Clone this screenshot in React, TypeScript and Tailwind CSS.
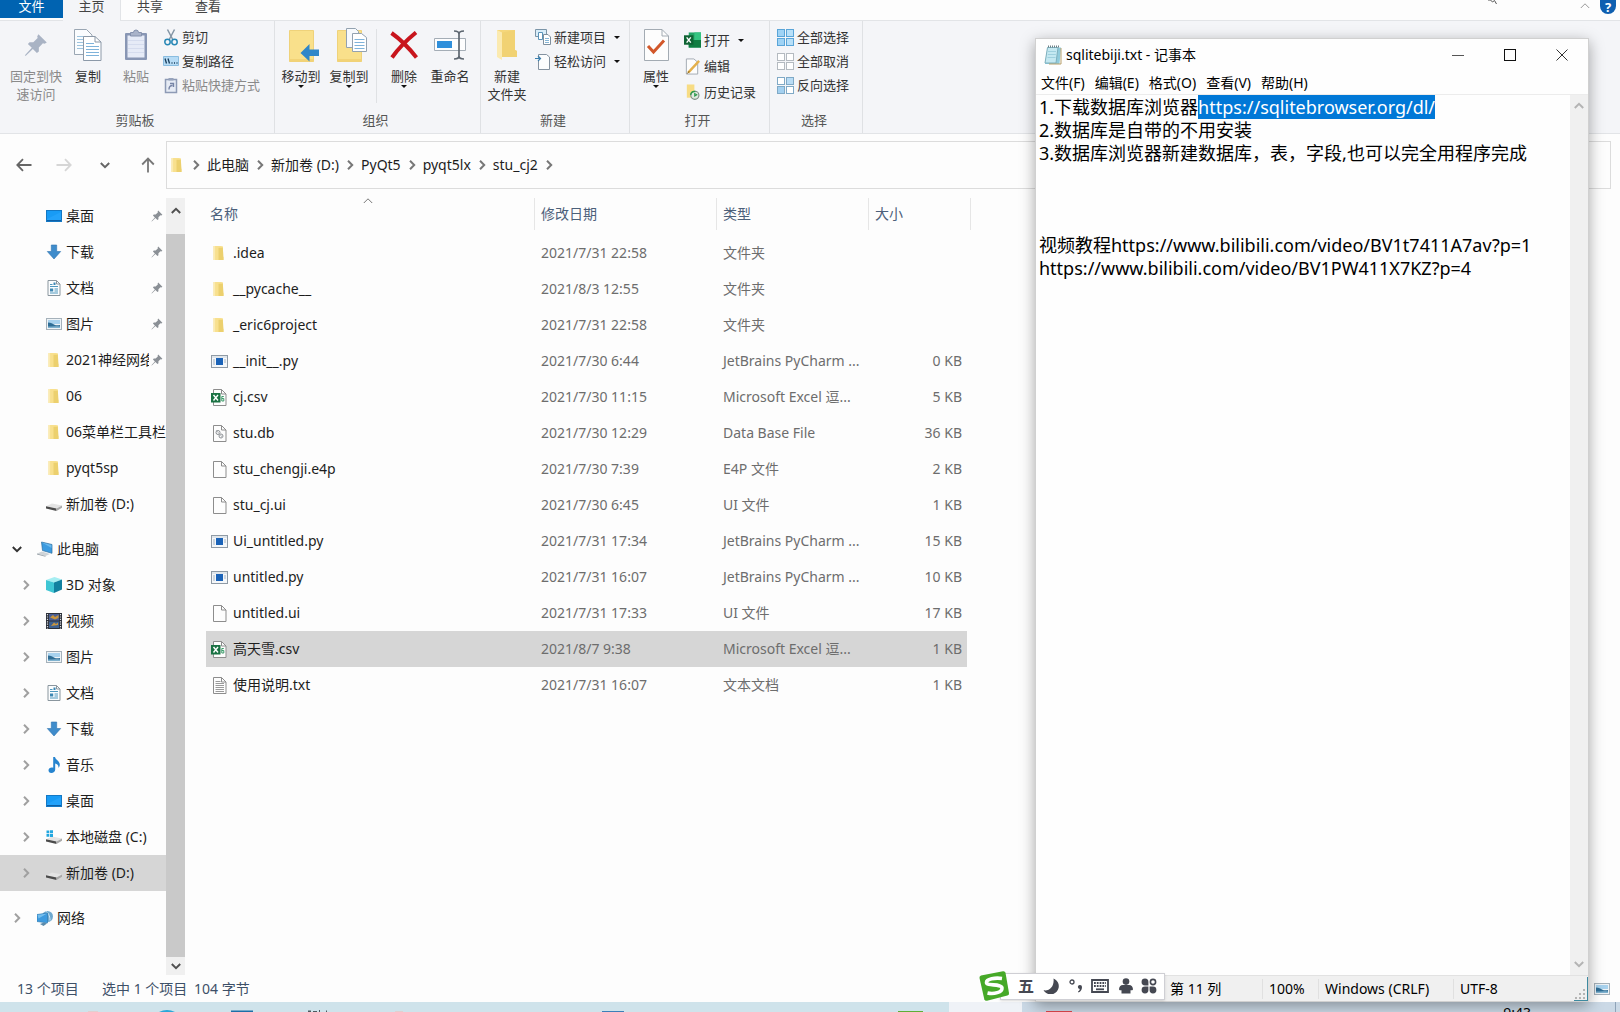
import { useEffect, useRef } from "react";
import type { ReactNode } from "react";

type IconProps = { className?: string };

const Chevron = ({ className = "" }: IconProps) => (
  <svg viewBox="0 0 10 10" className={`size-2.5 shrink-0 ${className}`} fill="none" stroke="currentColor">
    <path d="M3 0.8 7.2 5 3 9.2" />
  </svg>
);

const Caret = ({ className = "" }: IconProps) => (
  <svg viewBox="0 0 6 3" className={`h-[3px] w-1.5 shrink-0 ${className}`} fill="#111">
    <path d="M0 0h6L3 3z" />
  </svg>
);

const FolderIcon = ({ className = "size-4" }: IconProps) => (
  <svg viewBox="0 0 16 16" className={`shrink-0 ${className}`}>
    <path d="M2.5 1H10l2 .6V12l.5.4V15H2.5z" fill="#f8e08e" />
    <path d="M7.5 2.8h4.3l.7 9.5V15h-5z" fill="#ecd06e" />
    <path d="M2.5 1h1.6v14H2.5z" fill="#fbebb2" />
  </svg>
);

const DesktopIcon = () => (
  <svg viewBox="0 0 16 16" className="size-4 shrink-0">
    <rect x=".5" y="2.5" width="15" height="11" fill="#189bf5" stroke="#1478c4" />
    <path d="M1 11 15 4v9H1z" fill="#2ea9ff" opacity=".5" />
    <path d="M1 12.5h14" stroke="#0d5fa6" />
  </svg>
);

const DownloadIcon = () => (
  <svg viewBox="0 0 16 16" className="size-4 shrink-0">
    <path d="M5.3 1h5.4v6.5h4L8 15 1.3 7.5h4z" fill="#3f8ccb" stroke="#2f74b0" strokeWidth=".6" />
  </svg>
);

const DocumentIcon = () => (
  <svg viewBox="0 0 16 16" className="size-4 shrink-0" fill="none">
    <path d="M2 .5h8.5L14 4v11.5H2z" fill="#fbfdfe" stroke="#8a969e" />
    <path d="M10.5.5V4H14" stroke="#8a969e" />
    <path d="M4 4.500h2.500M4 6.500h8M8.500 9H12M8.500 11H12M4 13h8" stroke="#4f97bd" />
    <path d="M4 8.500h3.200v3H4zM7.500 2.500h2v2.500h-2z" fill="#3d87b3" />
  </svg>
);

const PictureIcon = () => (
  <svg viewBox="0 0 16 16" className="size-4 shrink-0">
    <rect x=".5" y="2.5" width="15" height="11" fill="#eef3f6" stroke="#a5b1ba" />
    <path d="M2 4h12v4H2z" fill="#a8d2ee" />
    <path d="M2 6.500c3 0 4.500 1.500 6.500 2.300S12 9.200 14 9v3H2z" fill="#2f6e96" />
    <path d="M2 10.500c4 0 7-.6 12 0V12H2z" fill="#7fb2cf" />
  </svg>
);

const DriveIcon = ({ system }: { system?: boolean }) => (
  <svg viewBox="0 0 16 16" className="size-4 shrink-0">
    <path d="M0 10.200 6 7.500l10 2-5.500 3z" fill="#e3e3e3" />
    <path d="M0 10.200 10.500 12.500V15L0 12.600z" fill="#4b4b4b" />
    <path d="M10.500 12.500 16 9.500v2.300L10.500 15z" fill="#a9a9a9" />
    {system && <path d="M.5 1.500h2.800v2.800H.5zM4 1.200h3v3.100H4zM.5 5h2.800v2.800H.5zM4 5h3v3H4z" fill="#22a7e0" />}
  </svg>
);

const ComputerIcon = () => (
  <svg viewBox="0 0 16 16" className="size-4 shrink-0">
    <path d="M4.500 1 15 3.500v8.800L5.500 9.500z" fill="#3c9be0" stroke="#2c6d9e" strokeWidth=".7" />
    <path d="M5 1.500 14.500 4v3z" fill="#7cc4f2" opacity=".7" />
    <path d="M0 12.500 5 10.500l8 2.500-4.500 2z" fill="#cfd4d8" />
    <path d="m0 12.500 8.500 2.500v.8L0 13.500z" fill="#98a1a8" />
  </svg>
);

const CubeIcon = () => (
  <svg viewBox="0 0 16 16" className="size-4 shrink-0">
    <path d="M0 3 8.500 0 16 2.500 8 5.500z" fill="#a6eef2" />
    <path d="M0 3 8 5.500V16L0 13z" fill="#3fc6d4" />
    <path d="M8 5.500 16 2.500V12.500L8 16z" fill="#12809f" />
  </svg>
);

const VideoIcon = () => (
  <svg viewBox="0 0 16 16" className="size-4 shrink-0">
    <path d="M0 0h16v16H0z" fill="#2b2f38" />
    <path d="M3 1h10v6.500H3z" fill="#4a5f95" />
    <path d="M3 8.500h10V15H3z" fill="#3f6190" />
    <path d="M4 4.500 7 2l2 2 3.500-2v3L9 6.500zM5 13l3-3.500 2 1.500 2-1.500V12z" fill="#c9953d" />
    <path d="M1.500 1v15M14.500 1v15" stroke="#dfe3e8" strokeWidth="1.2" strokeDasharray="1.2 1.2" />
  </svg>
);

const MusicIcon = () => (
  <svg viewBox="0 0 16 16" className="size-4 shrink-0">
    <path d="M7.200 0H9c.3 2.500 4.800 4 4.800 7.500 0 1.600-.6 2.700-1.300 3.500.3-3-1.300-4-3.300-4.600v6c0 2-1.800 3.600-3.800 3.600S2.500 14.800 2.500 13.300s1.500-2.700 3.300-2.700c.5 0 1 .1 1.400.2z" fill="#2684cf" />
  </svg>
);

const NetworkIcon = () => (
  <svg viewBox="0 0 16 16" className="size-4 shrink-0">
    <circle cx="10.500" cy="6.500" r="5.500" fill="#6fa9cf" />
    <path d="M9 1.500c2 1 4 4 4 9" stroke="#d3e8f5" fill="none" />
    <path d="M0 4.500 10.500 3v10L0 11.500z" fill="#3d9ade" stroke="#2c75ab" strokeWidth=".6" />
    <path d="m.5 5 9.500-1.500-8.500 5z" fill="#8ccdf4" opacity=".7" />
    <path d="m3 14 4-1.500 3 1L6.500 16z" fill="#5b8bab" />
  </svg>
);

const PinIcon = ({ className = "" }: IconProps) => (
  <svg viewBox="0 0 16 16" className={`shrink-0 ${className}`} fill="currentColor">
    <path d="M9.600.8 15.200 6.400 13.700 7.200 12.600 6.900 9.900 9.700 9.900 12.300 8.600 13.300 5.900 10.600 1.400 15 .6 15.300.9 14.500 5.200 9.900 2.600 7.300 3.700 6.100 6.200 6.100 9.100 3.400 8.800 2.300z" />
  </svg>
);

const PyIcon = () => (
  <svg viewBox="0 0 17 16" className="h-4 w-[17px] shrink-0">
    <rect x=".5" y="2.5" width="16" height="12" fill="#f4f7fa" stroke="#8f9aa5" />
    <path d="M1 4h15" stroke="#cbd4dc" />
    <path d="M5 5h7v7H5z" fill="#1b63b8" />
    <path d="M2 7h2M2 9h2M2 11h2M13 7h2M13 9h2" stroke="#a7b4c0" />
  </svg>
);

const Sheet = ({ children }: { children?: ReactNode }) => (
  <svg viewBox="0 0 17 17" className="size-[17px] shrink-0" fill="none">
    <path d="M2.500.5h8L15 5v11.500H2.500z" fill="#fdfdfd" stroke="#8d8d8d" />
    <path d="M10.500.5V5H15" stroke="#8d8d8d" />
    {children}
  </svg>
);

const CsvIcon = () => (
  <Sheet>
    <path d="M0 4h9.500v9.500H0z" fill="#1a7243" />
    <path d="m2.500 6 4.500 5.500M7 6l-4.500 5.500" stroke="#fff" strokeWidth="1.400" />
    <path d="M12.800 7.500h-2v4.500h2V9.500h-2" stroke="#3a9c68" />
  </Sheet>
);

const DbIcon = () => (
  <Sheet>
    <circle cx="7" cy="7.500" r="2" stroke="#8b8f93" />
    <circle cx="10" cy="11" r="2" stroke="#8b8f93" />
    <path d="m5 5 7 8" stroke="#b5b8bb" />
  </Sheet>
);

const TxtIcon = () => (
  <Sheet>
    <path d="M4.500 4.500h5M4.500 6.500h8.500M4.500 8.500h8.500M4.500 10.500h8.500M4.500 12.500h8.500M4.500 14.500h8.500" stroke="#9a9a9a" />
  </Sheet>
);

// ---- ribbon drawings

const CopyIcon = () => (
  <svg viewBox="0 0 28 32" className="h-8 w-7" fill="none">
    <path d="M.5.500h12L18 6v19.500H.5z" fill="#fafcfe" stroke="#9aa6b3" />
    <path d="M3 7.500h8M3 10.500h8M3 13.500h6M3 16.500h6M3 19.500h6" stroke="#9cc3de" />
    <path d="M9.500 7.500h11.500l6 5.500v18.500H9.500z" fill="#fff" stroke="#8c99a8" />
    <path d="M21 7.500V13h6" stroke="#8c99a8" />
    <path d="M12 14.500h8M12 17.500h13M12 20.500h13M12 23.500h13M12 26.500h13" stroke="#7fb3da" />
  </svg>
);

const PasteIcon = () => (
  <svg viewBox="0 0 24 32" className="h-8 w-6" fill="none">
    <rect x="1" y="4" width="22" height="27" rx="1" fill="#8896b4" />
    <path d="M3.500 6.500h17v22h-17z" fill="#e6ebf7" />
    <path d="M4 11.500h16M4 15.500h16M4 19.500h16M4 23.500h16" stroke="#d5dcee" />
    <path d="M6.500 3.500h3a2.500 2.500 0 0 1 5 0h3V7h-11z" fill="#a9b3c9" stroke="#8491ad" />
  </svg>
);

const BigFolder = ({ children }: { children?: ReactNode }) => (
  <svg viewBox="0 0 30 34" className="ml-1.5 h-[34px] w-[30px]" fill="none">
    <path d="M.5 2.500h24v31H.5z" fill="#f9e08b" stroke="#efd27a" />
    <path d="M.5 31h24v2.500H.5z" fill="#f2d377" />
    {children}
  </svg>
);

const DeleteIcon = () => (
  <svg viewBox="0 0 28 28" className="size-7" fill="none" stroke="#c8151d" strokeWidth="4">
    <path d="M1.500 2C10 8 19 17 26.500 26.500M26 1.500C18 8 8 18 2 26.500" />
  </svg>
);

const RenameIcon = () => (
  <svg viewBox="0 0 32 30" className="h-[30px] w-8" fill="none">
    <path d="M.5 8.500h31v12H.5z" fill="#fdfdfe" stroke="#a4adb6" />
    <path d="M3 11h15v7H3z" fill="#2f8fdb" />
    <path d="M20 1c3 0 5 .5 5 3v22c0 2-2 3-5 3M30 1c-3 0-5 .5-5 3v22c0 2 2 3 5 3" stroke="#5d6670" strokeWidth="1.700" />
  </svg>
);

const NewFolderIcon = () => (
  <svg viewBox="0 0 22 32" className="h-8 w-[22px]">
    <path d="M1 1h18v20l2 1v6H6l-5-1z" fill="#f5d77c" />
    <path d="M1 1 6 3.500V31L1 28z" fill="#fbeab0" />
    <path d="M6 3.500 19 1v20l2 1v6H6z" fill="#f1d273" />
  </svg>
);

const PropertiesIcon = () => (
  <svg viewBox="0 0 25 32" className="h-8 w-[25px]" fill="none">
    <path d="M.5.500H18L24.500 7v24.500H.5z" fill="#fdfdfd" stroke="#a3abb3" />
    <path d="M18 .5V7h6.500" stroke="#a3abb3" />
    <path d="m4 17 5.500 6L20 11.500" stroke="#d2572a" strokeWidth="3" />
  </svg>
);

const CutIcon = () => (
  <svg viewBox="0 0 16 17" className="h-[17px] w-4" fill="none">
    <path d="M4.500.500 10 11M11.500.500 6 11" stroke="#8395a5" strokeWidth="1.500" />
    <circle cx="4.500" cy="13" r="2.700" stroke="#2787b5" strokeWidth="1.500" />
    <circle cx="11.500" cy="13" r="2.700" stroke="#2787b5" strokeWidth="1.500" />
  </svg>
);

const CopyPathIcon = () => (
  <svg viewBox="0 0 16 10" className="h-2.5 w-4" fill="none">
    <path d="M.5.500h15v9H.5z" fill="#b7dcf6" stroke="#8abde0" />
    <path d="m2 2.500 1.500 5M5 2.500l1.500 5" stroke="#173d5c" strokeWidth="1.300" />
    <path d="M8.500 7h1M11 7h1M13.500 7h1" stroke="#173d5c" strokeWidth="1.300" />
  </svg>
);

const PasteLinkIcon = () => (
  <svg viewBox="0 0 14 17" className="h-[17px] w-3.5" fill="none">
    <path d="M1.500 2.500h11v13h-11z" fill="#e6ebf5" stroke="#8d9ab5" strokeWidth="1.500" />
    <path d="M4.500 1h5v2.500h-5z" fill="#97a3bc" />
    <path d="M5 12.500c0-2.500 1-4 3.500-4M6 6.500h3.500V10" stroke="#7684a6" strokeWidth="1.400" />
  </svg>
);

const NewItemIcon = () => (
  <svg viewBox="0 0 16 16" className="size-4" fill="none">
    <path d="M.5.500h11v7H.5z" fill="#d9edf9" stroke="#7b95a8" />
    <path d="M3.500 3.500h4v7h-4z" fill="#fff" stroke="#5a93b8" />
    <path d="M8.500 5.500H13l2.500 2.500v7.500h-7z" fill="#fff" stroke="#7f8f9d" />
    <path d="M10 9.500h4M10 11.500h4M10 13.500h4" stroke="#86b5d6" />
  </svg>
);

const EasyAccessIcon = () => (
  <svg viewBox="0 0 16 17" className="h-[17px] w-4" fill="none">
    <path d="M3.500 5V1.500h8L14.500 4v12.500h-11V8" fill="#fcfdfe" stroke="#8492a0" />
    <path d="M0 5.500h5M3 3l2.500 2.500L3 8" stroke="#3b7fae" strokeWidth="1.200" />
  </svg>
);

const ExcelIcon = () => (
  <svg viewBox="0 0 18 16" className="h-4 w-[18px]" fill="none">
    <path d="M5 0h13v16H5z" fill="#21a366" />
    <path d="M11 0h7v8h-7z" fill="#33c481" />
    <path d="M5 8h13v8H5z" fill="#107c41" />
    <path d="M0 3h10v10H0z" fill="#0e6334" />
    <path d="m2.800 5.200 4.400 5.600M7.200 5.200l-4.400 5.600" stroke="#fff" strokeWidth="1.500" />
  </svg>
);

const EditIcon = () => (
  <svg viewBox="0 0 18 17" className="h-[17px] w-[18px]" fill="none">
    <path d="M2.500.500h8L14.500 4v12.500h-12z" fill="#fdfdfd" stroke="#a0a8b0" />
    <path d="M4.500 15 16 2.500" stroke="#e4b04c" strokeWidth="2.500" />
    <path d="m3.500 16 2-2.500" stroke="#71500f" />
  </svg>
);

const HistoryIcon = () => (
  <svg viewBox="0 0 18 17" className="h-[17px] w-[18px]" fill="none">
    <path d="M3 0h8v14H3z" fill="#f7dc84" />
    <circle cx="11.500" cy="11.500" r="4.300" fill="#dfe9df" stroke="#7d8d83" strokeWidth="1.200" />
    <path d="M7 11c.5-2.500 2.500-4 5-3.500M11.500 9v3l2.500-1.500" stroke="#2f9a4c" strokeWidth="1.500" />
  </svg>
);

const SelectIcon = ({ fills, stroke = "#5aa5d8" }: { fills: string[]; stroke?: string }) => (
  <svg viewBox="0 0 17 17" className="size-[17px]" stroke={stroke}>
    <rect x=".5" y=".5" width="7" height="7" fill={fills[0]} />
    <rect x="9.5" y=".5" width="7" height="7" fill={fills[1]} />
    <rect x=".5" y="9.5" width="7" height="7" fill={fills[2]} />
    <rect x="9.5" y="9.5" width="7" height="7" fill={fills[3]} />
  </svg>
);

type BigButtonProps = {
  icon: ReactNode;
  label: string;
  second?: string;
  caret?: boolean;
  disabled?: boolean;
  className?: string;
};

const BigButton = ({ icon, label, second, caret, disabled, className = "w-12" }: BigButtonProps) => (
  <button
    type="button"
    disabled={disabled}
    className={`flex shrink-0 flex-col items-center pt-1.5 leading-[18px] whitespace-nowrap disabled:text-[#8a8a8a] ${className}`}
  >
    <span className="mb-1 flex h-9 items-center">{icon}</span>
    {label}
    {second && <span>{second}</span>}
    {caret && <Caret />}
  </button>
);

type SmallButtonProps = { icon: ReactNode; label: string; caret?: boolean; disabled?: boolean; className?: string };

const SmallButton = ({ icon, label, caret, disabled, className = "h-6" }: SmallButtonProps) => (
  <button
    type="button"
    disabled={disabled}
    className={`flex items-center whitespace-nowrap disabled:text-[#8a8a8a] ${className}`}
  >
    <span className="mr-[3px] flex w-[17px] justify-center">{icon}</span>
    {label}
    {caret && <Caret className="ml-2" />}
  </button>
);

type GroupProps = { label: string; className: string; inset?: string; children: ReactNode };

const Group = ({ label, className, inset = "pl-0.5", children }: GroupProps) => (
  <div className={`flex shrink-0 flex-col border-r border-[#dfe1e4] ${className}`}>
    <div className={`flex flex-1 ${inset}`}>{children}</div>
    <div className="pr-1 pb-1 text-center leading-[18px] text-[#555]">{label}</div>
  </div>
);

const Ribbon = () => (
  <div className="flex h-[114px] shrink-0 border-y border-[#e2e4e7] bg-[#f4f5f8] text-[13px] text-[#333]">
    <Group label="剪贴板" className="w-[275px]" inset="pl-2">
      <BigButton
        className="w-14"
        disabled
        icon={<PinIcon className="size-6 text-[#a9b3c4]" />}
        label="固定到快"
        second="速访问"
      />
      <BigButton icon={<CopyIcon />} label="复制" />
      <BigButton disabled icon={<PasteIcon />} label="粘贴" />
      <div className="ml-0.5 pt-1">
        <SmallButton icon={<CutIcon />} label="剪切" />
        <SmallButton icon={<CopyPathIcon />} label="复制路径" />
        <SmallButton disabled icon={<PasteLinkIcon />} label="粘贴快捷方式" />
      </div>
    </Group>
    <Group label="组织" className="w-[206px]">
      <BigButton
        caret
        icon={
          <BigFolder>
            <path d="M30 21.500H20.500V16L11.500 25l9 8.500V28H30z" fill="#2f86c9" />
          </BigFolder>
        }
        label="移动到"
      />
      <BigButton
        caret
        icon={
          <BigFolder>
            <path d="M9.500.500h9l3 3v16h-12z" fill="#f7fafd" stroke="#93a2b0" />
            <path d="M15.500 5.500h9l5 4v14h-14z" fill="#fff" stroke="#93a2b0" />
            <path d="M17.500 11.500h10M17.500 14.500h10M17.500 17.500h10M17.500 20.500h10" stroke="#7fb3da" />
          </BigFolder>
        }
        label="复制到"
      />
      <div className="mx-[3px] mt-2 h-[74px] w-px bg-[#dfe1e4]" />
      <BigButton caret icon={<DeleteIcon />} label="删除" />
      <BigButton className="w-11" icon={<RenameIcon />} label="重命名" />
    </Group>
    <Group label="新建" className="w-[149px]">
      <BigButton icon={<NewFolderIcon />} label="新建" second="文件夹" />
      <div className="ml-[3px] pt-1">
        <SmallButton caret icon={<NewItemIcon />} label="新建项目" />
        <SmallButton caret icon={<EasyAccessIcon />} label="轻松访问" />
      </div>
    </Group>
    <Group label="打开" className="w-[140px]">
      <BigButton caret icon={<PropertiesIcon />} label="属性" />
      <div className="ml-1 pt-1.5">
        <SmallButton className="h-[26px]" caret icon={<ExcelIcon />} label="打开" />
        <SmallButton className="h-[26px]" icon={<EditIcon />} label="编辑" />
        <SmallButton className="h-[26px]" icon={<HistoryIcon />} label="历史记录" />
      </div>
    </Group>
    <Group label="选择" className="w-[93px]" inset="pl-[7px]">
      <div className="pt-1">
        <SmallButton icon={<SelectIcon fills={["#9fd3f5", "#b9e0f8", "#9fd3f5", "#b9e0f8"]} />} label="全部选择" />
        <SmallButton icon={<SelectIcon stroke="#b4bac0" fills={["#fff", "#fff", "#fff", "#fff"]} />} label="全部取消" />
        <SmallButton icon={<SelectIcon stroke="#7fa9c6" fills={["#fff", "#b9dcf5", "#a3d0f0", "#fff"]} />} label="反向选择" />
      </div>
    </Group>
  </div>
);

const TabBar = () => (
  <div className="flex h-5 shrink-0 items-start text-[13px] leading-3 text-[#444]">
    <button type="button" className="h-[18px] w-[63px] bg-[#0063b1] pb-1.5 text-white">
      文件
    </button>
    <button type="button" className="z-10 h-[21px] w-[58px] border-r border-[#e2e4e7] bg-[#f4f5f8] pb-[9px]">
      主页
    </button>
    <button type="button" className="w-[58px]">
      共享
    </button>
    <button type="button" className="w-[58px]">
      查看
    </button>
    <button type="button" aria-label="最小化功能区" className="mt-px mr-2.5 ml-auto text-[#9a9a9a]">
      <Chevron className="-rotate-90" />
    </button>
    <button
      type="button"
      className="mr-1 h-3.5 w-4 rounded-b-full bg-[#0f5fb0] text-center font-bold text-white"
    >
      ?
    </button>
    <svg viewBox="0 0 10 4" className="absolute top-0 right-[122px] h-1 w-2.5" fill="none" stroke="#555">
      <path d="M0 0h2.500l2 2 2-1.500L8.500 4" />
    </svg>
  </div>
);

const crumbs = ["此电脑", "新加卷 (D:)", "PyQt5", "pyqt5lx", "stu_cj2"];

const AddressBar = () => (
  <div className="flex h-[62px] shrink-0 items-center pr-[9px] text-[#666]">
    <div className="flex w-[166px] shrink-0 items-center">
      <button type="button" aria-label="后退" className="ml-4">
        <svg viewBox="0 0 16 14" className="h-3.5 w-4" fill="none" stroke="#666" strokeWidth="1.8">
          <path d="M15.500 7H1.500M7 1.200 1.300 7 7 12.800" />
        </svg>
      </button>
      <button type="button" aria-label="前进" className="ml-6">
        <svg viewBox="0 0 16 14" className="h-3.5 w-4" fill="none" stroke="#d6d6d6" strokeWidth="1.8">
          <path d="M.5 7h14M9 1.200 14.700 7 9 12.800" />
        </svg>
      </button>
      <button type="button" aria-label="最近浏览的位置" className="ml-7">
        <Chevron className="size-2 rotate-90 stroke-2" />
      </button>
      <button type="button" aria-label="上移" className="ml-[31px]">
        <svg viewBox="0 0 14 16" className="h-4 w-3.5" fill="none" stroke="#777" strokeWidth="1.8">
          <path d="M7 15.500V1.500M1.200 7.500 7 1.500l5.800 6" />
        </svg>
      </button>
    </div>
    <div className="flex h-12 flex-1 items-center border border-[#dcdcdc] pl-0.5">
      <FolderIcon />
      <Chevron className="ml-1.5 stroke-2 text-[#777]" />
      {crumbs.map((crumb) => (
        <div key={crumb} className="flex items-center">
          <button type="button" className="mx-1.5 whitespace-nowrap text-[#1d1d1d]">
            {crumb}
          </button>
          <Chevron className="stroke-2 text-[#777]" />
        </div>
      ))}
    </div>
  </div>
);

type TreeItem = { label: string; icon: ReactNode; pinned?: boolean; selected?: boolean };

const quickAccess: TreeItem[] = [
  { label: "桌面", icon: <DesktopIcon />, pinned: true },
  { label: "下载", icon: <DownloadIcon />, pinned: true },
  { label: "文档", icon: <DocumentIcon />, pinned: true },
  { label: "图片", icon: <PictureIcon />, pinned: true },
  { label: "2021神经网络", icon: <FolderIcon />, pinned: true },
  { label: "06", icon: <FolderIcon /> },
  { label: "06菜单栏工具栏状", icon: <FolderIcon /> },
  { label: "pyqt5sp", icon: <FolderIcon /> },
  { label: "新加卷 (D:)", icon: <DriveIcon /> },
];

const thisPc: TreeItem[] = [
  { label: "3D 对象", icon: <CubeIcon /> },
  { label: "视频", icon: <VideoIcon /> },
  { label: "图片", icon: <PictureIcon /> },
  { label: "文档", icon: <DocumentIcon /> },
  { label: "下载", icon: <DownloadIcon /> },
  { label: "音乐", icon: <MusicIcon /> },
  { label: "桌面", icon: <DesktopIcon /> },
  { label: "本地磁盘 (C:)", icon: <DriveIcon system /> },
  { label: "新加卷 (D:)", icon: <DriveIcon />, selected: true },
];

const treeRow = "flex h-9 w-full items-center whitespace-nowrap text-left";

const Sidebar = () => (
  <nav className="w-[166px] shrink-0 overflow-hidden text-[#1d1d1d]">
    <ul>
      {quickAccess.map((item) => (
        <li key={item.label}>
          <button type="button" className={`${treeRow} pl-[46px]`}>
            {item.icon}
            <span className={`ml-1 overflow-hidden ${item.pinned ? "w-[83px]" : ""}`}>{item.label}</span>
            {item.pinned && <PinIcon className="ml-0.5 size-3 text-[#8b9096]" />}
          </button>
        </li>
      ))}
    </ul>
    <button type="button" className={`${treeRow} mt-[9px] pl-3`}>
      <Chevron className="rotate-90 stroke-2 text-[#333]" />
      <span className="mr-1 ml-[15px]">
        <ComputerIcon />
      </span>
      此电脑
    </button>
    <ul>
      {thisPc.map((item) => (
        <li key={item.label}>
          <button type="button" className={`${treeRow} pl-[21px] ${item.selected ? "bg-[#d6d6d6]" : ""}`}>
            <Chevron className="stroke-2 text-[#a0a0a0]" />
            <span className="mr-1 ml-[15px]">{item.icon}</span>
            {item.label}
          </button>
        </li>
      ))}
    </ul>
    <button type="button" className={`${treeRow} mt-[9px] pl-3`}>
      <Chevron className="stroke-2 text-[#a0a0a0]" />
      <span className="mr-1 ml-[15px]">
        <NetworkIcon />
      </span>
      网络
    </button>
  </nav>
);

type FileRow = { name: string; icon: ReactNode; date: string; type: string; size?: string; selected?: boolean };

const files: FileRow[] = [
  { name: ".idea", icon: <FolderIcon />, date: "2021/7/31 22:58", type: "文件夹" },
  { name: "__pycache__", icon: <FolderIcon />, date: "2021/8/3 12:55", type: "文件夹" },
  { name: "_eric6project", icon: <FolderIcon />, date: "2021/7/31 22:58", type: "文件夹" },
  { name: "__init__.py", icon: <PyIcon />, date: "2021/7/30 6:44", type: "JetBrains PyCharm ...", size: "0 KB" },
  { name: "cj.csv", icon: <CsvIcon />, date: "2021/7/30 11:15", type: "Microsoft Excel 逗...", size: "5 KB" },
  { name: "stu.db", icon: <DbIcon />, date: "2021/7/30 12:29", type: "Data Base File", size: "36 KB" },
  { name: "stu_chengji.e4p", icon: <Sheet />, date: "2021/7/30 7:39", type: "E4P 文件", size: "2 KB" },
  { name: "stu_cj.ui", icon: <Sheet />, date: "2021/7/30 6:45", type: "UI 文件", size: "1 KB" },
  { name: "Ui_untitled.py", icon: <PyIcon />, date: "2021/7/31 17:34", type: "JetBrains PyCharm ...", size: "15 KB" },
  { name: "untitled.py", icon: <PyIcon />, date: "2021/7/31 16:07", type: "JetBrains PyCharm ...", size: "10 KB" },
  { name: "untitled.ui", icon: <Sheet />, date: "2021/7/31 17:33", type: "UI 文件", size: "17 KB" },
  { name: "高天雪.csv", icon: <CsvIcon />, date: "2021/8/7 9:38", type: "Microsoft Excel 逗...", size: "1 KB", selected: true },
  { name: "使用说明.txt", icon: <TxtIcon />, date: "2021/7/31 16:07", type: "文本文档", size: "1 KB" },
];

const headCell = "flex h-8 items-center border-r border-[#e6e6e6]";

const FileTable = () => (
  <table className="ml-[21px] h-fit w-[765px] table-fixed border-collapse whitespace-nowrap">
    <thead>
      <tr className="h-[37px] text-left align-top text-[#4c607a]">
        <th className="w-[329px] p-0 font-normal">
          <div className={`${headCell} relative pl-1`}>
            名称
            <Chevron className="absolute -top-0.5 left-[157px] -rotate-90 text-[#777]" />
          </div>
        </th>
        <th className="w-[182px] p-0 font-normal">
          <div className={`${headCell} pl-1.5`}>修改日期</div>
        </th>
        <th className="w-[152px] p-0 font-normal">
          <div className={`${headCell} pl-1.5`}>类型</div>
        </th>
        <th className="w-[98px] p-0 font-normal">
          <div className="flex h-8 items-center pl-1.5">大小</div>
        </th>
        <th className="w-1 p-0">
          <div className={headCell} />
        </th>
      </tr>
    </thead>
    <tbody>
      {files.map((file) => (
        <tr key={file.name} className={`h-9 text-[#6d6d6d] ${file.selected ? "*:bg-[#d6d6d6]" : ""}`}>
          <td className="py-0 pr-0 pl-[5px]">
            <div className="flex items-center text-[#1d1d1d]">
              <span className="mr-1 flex w-[18px]">{file.icon}</span>
              {file.name}
            </div>
          </td>
          <td className="py-0 pr-0 pl-1.5">{file.date}</td>
          <td className="py-0 pr-0 pl-1.5">{file.type}</td>
          <td className="py-0 pr-[5px] pl-0 text-right">{file.size}</td>
        </tr>
      ))}
    </tbody>
  </table>
);

const note = `1.下载数据库浏览器https://sqlitebrowser.org/dl/
2.数据库是自带的不用安装
3.数据库浏览器新建数据库，表，字段,也可以完全用程序完成



视频教程https://www.bilibili.com/video/BV1t7411A7av?p=1
https://www.bilibili.com/video/BV1PW411X7KZ?p=4`;

const selectedUrl = "https://sqlitebrowser.org/dl/";

const Notepad = () => {
  const editor = useRef<HTMLTextAreaElement>(null);

  useEffect(() => {
    const start = note.indexOf(selectedUrl);
    editor.current?.focus();
    editor.current?.setSelectionRange(start, start + selectedUrl.length);
  }, []);

  return (
    <section className="absolute top-[38px] right-[31px] bottom-2.5 flex w-[554px] flex-col border border-[#d0d0d0] bg-[#fefefe] text-black shadow-[0_4px_14px_rgba(0,0,0,0.35)]">
      <header className="flex h-8 shrink-0 items-center pl-2">
        <svg viewBox="0 0 18 20" className="mr-1 h-5 w-[18px]" fill="none">
          <path d="M3.500 2.500H17l-1.500 16.500H1z" fill="#8fcbdc" />
          <path d="M3.500 2.500H14l-2 15.500H1z" fill="#c4e8f1" stroke="#7fb0bd" />
          <path d="M4 6.500h8M3.800 9.500h8M3.500 12.500h8" stroke="#9fd0de" />
          <path d="M4 1.500h12" stroke="#6d7f86" strokeDasharray="1 1" strokeWidth="2" />
          <path d="M17 3v16H5" stroke="#b79f6a" />
        </svg>
        <h1>sqlitebiji.txt - 记事本</h1>
        <div className="ml-auto flex items-center">
          <button type="button" aria-label="最小化" className="grid w-[52px] place-items-center">
            <span className="h-px w-3 bg-[#555]" />
          </button>
          <button type="button" aria-label="最大化" className="grid w-[52px] place-items-center">
            <span className="size-3 border border-[#111]" />
          </button>
          <button type="button" aria-label="关闭" className="grid w-[52px] place-items-center">
            <svg viewBox="0 0 12 12" className="size-3" stroke="#333">
              <path d="M.5.500 11.500 11.500M11.500.500.5 11.500" />
            </svg>
          </button>
        </div>
      </header>
      <div className="flex h-[23px] shrink-0 items-center gap-2.5 pl-[5px]">
        {["文件(F)", "编辑(E)", "格式(O)", "查看(V)", "帮助(H)"].map((menu) => (
          <button key={menu} type="button">
            {menu}
          </button>
        ))}
      </div>
      <div className="flex min-h-0 flex-1 border-t border-[#ececec]">
        <textarea
          ref={editor}
          aria-label="文本编辑器"
          spellCheck={false}
          defaultValue={note}
          className="flex-1 resize-none overflow-hidden pt-px pl-[3px] text-lg leading-[23px] outline-none selection:bg-[#0078d7] selection:text-white"
        />
        <div className="flex w-[18px] flex-col items-center justify-between bg-[#f0f0f0] py-1.5 text-[#b4b4b4]">
          <Chevron className="-rotate-90 stroke-2" />
          <Chevron className="rotate-90 stroke-2" />
        </div>
      </div>
      <footer className="flex h-[26px] shrink-0 items-center justify-end border-t border-[#e2e2e2] bg-[#f0f0f0]">
        <span className="w-[92px]">第 11 列</span>
        <span className="w-14 border-l border-[#e0e0e0] pl-1.5">100%</span>
        <span className="w-[135px] border-l border-[#e0e0e0] pl-1.5">Windows (CRLF)</span>
        <span className="w-[121px] border-l border-[#e0e0e0] pl-1.5">UTF-8</span>
        <svg viewBox="0 0 14 24" className="h-6 w-3.5 self-end" fill="#b5b5b5">
          <path d="M9 12h2v2H9zM9 16h2v2H9zM9 20h2v2H9zM5 16h2v2H5zM5 20h2v2H5zM1 20h2v2H1z" />
          <path d="M13 0h1v24H0v-1h13z" fill="#3d8aa0" />
        </svg>
      </footer>
    </section>
  );
};

const ImeBar = () => (
  <div className="absolute right-[455px] bottom-2.5 flex items-center">
    <svg viewBox="0 0 32 32" className="z-10 -mr-2.5 size-8" fill="none">
      <path d="M3 5.500 25 1.200q2-.3 2.500 1.600L31 23q.3 2-1.600 2.600L9 30.800q-2 .3-2.700-1.600L1.500 8Q1.200 6 3 5.500z" fill="#46a928" />
      <path
        d="M24 8.500C17 7.500 8.500 9 8.500 12.500c0 3.800 15 .8 15.500 5.500.4 4.200-8 6.500-14.500 5"
        stroke="#fff"
        strokeWidth="3.6"
      />
    </svg>
    <div className="flex h-[27px] items-center border border-[#cfcfd4] bg-white pr-[7px] pl-[17px] text-[#454852] shadow-sm">
      <span className="w-[25px] text-base font-bold">五</span>
      <svg viewBox="0 0 16 16" className="size-4" fill="currentColor">
        <path d="M10.500.5a8.200 8.200 0 1 1-10 11.800C7 13.500 11.500 8 10.500.5z" />
      </svg>
      <svg viewBox="0 0 14 14" className="ml-2.5 size-3.5" fill="none">
        <circle cx="3" cy="3" r="2" stroke="currentColor" strokeWidth="1.300" />
        <path d="M11 6a2 2 0 0 1 2 2c0 3-1.500 4.500-3.500 5.500l-.5-1c1-.6 1.700-1.300 1.700-2.500A2 2 0 0 1 11 6z" fill="currentColor" />
      </svg>
      <svg viewBox="0 0 18 14" className="ml-2 h-3.5 w-[18px]" fill="none" stroke="currentColor">
        <path d="M1 1h16v12H1z" strokeWidth="1.8" />
        <path d="M3 4h12M3 7h12" strokeWidth="1.8" strokeDasharray="1.8 1" />
        <path d="M5 10.300h8" strokeWidth="1.8" />
      </svg>
      <svg viewBox="0 0 14 16" className="ml-2.5 h-4 w-3.5" fill="currentColor">
        <circle cx="7" cy="3.600" r="3.300" />
        <path d="M4 7h6c2.500 0 4 2 4 4.500-.6 1-1.600 1-2.500.7V15.500h-9V12.200c-.9.3-1.900.3-2.500-.7C0 9 1.500 7 4 7z" />
      </svg>
      <svg viewBox="0 0 16 16" className="ml-2 size-4" fill="currentColor">
        <path d="M4 .5A3.400 3.400 0 0 1 7.400 4v3.400H4A3.400 3.400 0 0 1 4 .5zM4 8.600h3.400V12A3.400 3.400 0 1 1 4 8.600zM8.600 8.600H12A3.400 3.400 0 1 1 8.600 12z" />
        <circle cx="12" cy="4" r="2.600" fill="none" stroke="currentColor" strokeWidth="1.600" />
      </svg>
    </div>
  </div>
);

const Taskbar = () => (
  <div className="flex h-2.5 shrink-0 overflow-hidden bg-[#cfe3eb]">
    <svg viewBox="0 0 949 10" className="h-2.5 w-[949px] shrink-0">
      <path d="M159 10q8-4 16 0z" fill="#2aa7d8" />
      <path d="M231 8.500h22V10h-22z" fill="#1c6fa8" />
      <path d="M308 8.500h3V10h-3zM313 9h4v1h-4zM319 8h1v2h-1zM326 8.500h1V10h-1z" fill="#4d5a60" />
      <path d="M602 9h22v1h-22z" fill="#3c7fb8" />
      <path d="M898 9h25v1h-25z" fill="#5fae35" />
      <path d="M88 9h10v1H88zM395 9h8v1h-8z" fill="#e0cfcf" />
    </svg>
    <div className="w-[73px] shrink-0 bg-[#eff2f7]" />
    <div className="flex flex-1 items-start justify-end bg-[#cbd9e6]">
      <svg viewBox="0 0 26 10" className="mr-auto ml-6 h-2.5 w-[26px]">
        <path d="M0 9h26v1H0z" fill="#e0474c" />
      </svg>
      <time className="mr-[84px] pt-[3px] text-sm leading-4 text-black">9:43</time>
      <div className="mr-1 h-2.5 w-px bg-[#8fa3b8]" />
    </div>
  </div>
);

export default function App() {
  return (
    <div
      lang="zh-CN"
      className="relative flex h-screen flex-col overflow-hidden bg-[#fdfdfd] font-['Noto_Sans','Noto_Sans_CJK_SC',sans-serif] text-sm"
    >
      <TabBar />
      <Ribbon />
      <AddressBar />
      <main className="flex min-h-0 flex-1 pt-0.5">
        <Sidebar />
        <div className="flex w-[19px] shrink-0 flex-col items-center bg-[#f0f0f0] text-[#505050]">
          <Chevron className="mt-2 mb-[18px] -rotate-90 stroke-2" />
          <div className="w-full flex-1 bg-[#c9c9c9]" />
          <Chevron className="my-1 rotate-90 stroke-2" />
        </div>
        <FileTable />
      </main>
      <footer className="flex h-[27px] shrink-0 items-center pr-2.5 pl-[17px] text-[#3d5068]">
        <span className="w-[85px]">13 个项目</span>
        <span className="w-[92px]">选中 1 个项目</span>
        <span>104 字节</span>
        <button type="button" aria-label="大图标" className="ml-auto">
          <PictureIcon />
        </button>
      </footer>
      <Taskbar />
      <Notepad />
      <ImeBar />
    </div>
  );
}
